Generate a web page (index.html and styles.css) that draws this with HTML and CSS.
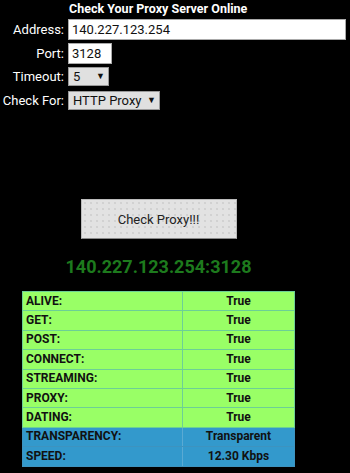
FILE: index.html
```html
<!DOCTYPE html>
<html>
<head>
<meta charset="utf-8">
<link rel="stylesheet" href="styles.css">
</head>
<body>
<div class="form">
  <div class="row"><span class="lbl"></span><span class="title">Check Your Proxy Server Online</span></div>
  <div class="row r-addr"><span class="lbl">Address:</span><span class="field addr">140.227.123.254</span></div>
  <div class="row r-port"><span class="lbl">Port:</span><span class="field port">3128</span></div>
  <div class="row r-to"><span class="lbl">Timeout:</span><span class="sel to">5<span class="arrow">▼</span></span></div>
  <div class="row r-cf"><span class="lbl">Check For:</span><span class="sel cf">HTTP Proxy<span class="arrow">▼</span></span></div>
</div>
<div class="wrap">
  <div class="center">
    <div class="btn">Check Proxy!!!</div>
    <div class="result">140.227.123.254:3128</div>
    <table class="res">
      <tr class="g"><td>ALIVE:</td><td>True</td></tr>
      <tr class="g"><td>GET:</td><td>True</td></tr>
      <tr class="g"><td>POST:</td><td>True</td></tr>
      <tr class="g"><td>CONNECT:</td><td>True</td></tr>
      <tr class="g"><td>STREAMING:</td><td>True</td></tr>
      <tr class="g"><td>PROXY:</td><td>True</td></tr>
      <tr class="g"><td>DATING:</td><td>True</td></tr>
      <tr class="b"><td>TRANSPARENCY:</td><td>Transparent</td></tr>
      <tr class="b"><td>SPEED:</td><td>12.30 Kbps</td></tr>
    </table>
  </div>
</div>
</body>
</html>
```

FILE: styles.css
```css
html, body {
  margin: 0;
  padding: 0;
  background: #000;
  color: #fff;
  font-family: Roboto, "Liberation Sans", sans-serif;
  font-size: 13px;
}
.wrap {
  width: 301px;
  margin-left: 8px;
}
.form {
  padding-top: 1px;
}
.row {
  display: flex;
  align-items: center;
  margin-bottom: 3px;
}
.lbl {
  width: 64px;
  text-align: right;
  margin-right: 4px;
  flex: none;
  white-space: nowrap;
}
.title {
  font-weight: bold;
  font-size: 12.5px;
  line-height: 15px;
  margin-left: 1px;
}
.field {
  background: #fff;
  color: #111;
  box-sizing: border-box;
  height: 21px;
  line-height: 19px;
  padding: 0 3px;
  border: 1px solid #aaa;
  font-size: 13px;
}
.addr { width: 278px; }
.port { width: 44px; height: 21px; }
.r-port { margin-bottom: 3px; }
.sel {
  background: #e0e0e0;
  color: #111;
  box-sizing: border-box;
  height: 19px;
  line-height: 17px;
  border: 1px solid #999;
  padding: 0 3px 0 4px;
  display: flex;
  align-items: center;
  justify-content: space-between;
  font-size: 13px;
}
.arrow {
  font-size: 9px;
  margin-left: 4px;
}
.to { width: 41px; }
.cf { width: 92px; }
.r-to { margin-bottom: 5px; }
.center {
  display: flex;
  flex-direction: column;
  align-items: center;
}
.btn {
  margin-top: 86px;
  width: 156px;
  height: 40px;
  box-sizing: border-box;
  background-color: #e2e2e2;
  background-image: radial-gradient(circle, #c8c8c8 0.6px, transparent 0.9px);
  background-size: 6px 6px;
  border: 1px solid #bbb;
  border-bottom-color: #888;
  color: #222;
  display: flex;
  align-items: center;
  justify-content: center;
  font-size: 13px;
}
.result {
  margin-top: 17px;
  color: #1d7a1d;
  font-weight: bold;
  font-size: 18px;
  line-height: 22px;
}
.res {
  margin-top: 13px;
  width: 273px;
  border-collapse: collapse;
  font-weight: bold;
  font-size: 12px;
  color: #111;
}
.res td {
  height: 19.4px;
  padding: 0 0 0 3px;
  box-sizing: border-box;
  line-height: 17px;
}
.res td:first-child { width: 160px; }
.res td:last-child { text-align: center; padding: 0; }
.res tr.g td {
  background: #99ff66;
  border: 1px solid #6ccf96;
}
.res tr.b td {
  background: #3399cc;
  border: 1px solid #3d93bf;
}
.res tr.b + tr.b td { border-top: 1px dotted #7fbfe0; }
.res tr.b td:first-child { border-right: 1px solid #5aaad3; }
```
